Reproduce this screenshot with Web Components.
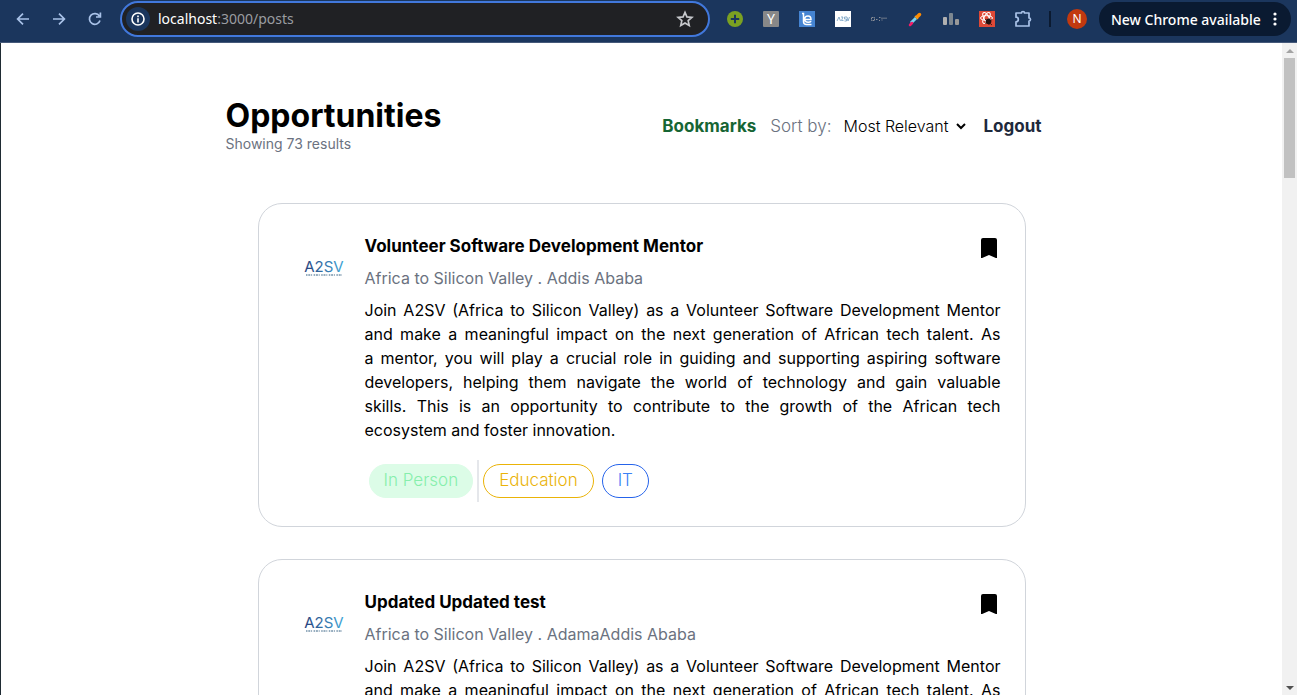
<!DOCTYPE html>
<html lang="en">
<head>
<meta charset="utf-8">
<title>Opportunities</title>
<style>
  html, body { height: 100%; margin: 0; }
  body { font-family: Inter, "Open Sans", sans-serif; background: #fff; color: #000; overflow: hidden; }
</style>
</head>
<body>
<browser-window>
  <browser-toolbar slot="toolbar"></browser-toolbar>
  <posts-header></posts-header>
  <post-list>
    <post-card>
      <span slot="title">Volunteer Software Development Mentor</span>
      <span slot="place">Africa to Silicon Valley . Addis Ababa</span>
      Join A2SV (Africa to Silicon Valley) as a Volunteer Software Development Mentor and make a meaningful impact on the next generation of African tech talent. As a&nbsp;mentor, you will play a crucial role in guiding and supporting aspiring software developers, helping them navigate the world of technology and gain valuable skills.&nbsp;This is an opportunity to contribute to the growth of the African tech ecosystem and foster innovation.
      <tag-chip slot="kind" tone="green">In Person</tag-chip>
      <tag-chip slot="tags" tone="amber">Education</tag-chip>
      <tag-chip slot="tags" tone="blue">IT</tag-chip>
    </post-card>
    <post-card>
      <span slot="title">Updated Updated test</span>
      <span slot="place">Africa to Silicon Valley . AdamaAddis Ababa</span>
      Join A2SV (Africa to Silicon Valley) as a Volunteer Software Development Mentor and make a meaningful impact on the next generation of African tech talent. As a&nbsp;mentor,
    </post-card>
  </post-list>
</browser-window>

<script>
function define(name, html) {
  const template = document.createElement('template');
  template.innerHTML = html;
  customElements.define(name, class extends HTMLElement {
    constructor() {
      super();
      this.attachShadow({ mode: 'open' }).append(template.content.cloneNode(true));
    }
  });
}

define('browser-window', `
<style>
  :host { display: flex; flex-direction: column; height: 100vh; }
  .view { flex: 1; min-height: 0; display: flex; border-left: 1px solid #1f2b33; }
  main { flex: 1; min-width: 0; overflow: hidden; }
</style>
<slot name="toolbar"></slot>
<div class="view"><main><slot></slot></main><page-scrollbar></page-scrollbar></div>`);

define('page-scrollbar', `
<style>
  :host { display: flex; flex-direction: column; width: 15px; background: #f1f1f1; }
  svg { display: block; width: 15px; height: 15px; flex: none; }
  .track { flex: 1; padding: 0 2px; }
  .thumb { height: 120px; background: #c1c1c1; }
</style>
<svg viewBox="0 0 15 15"><path d="M4 10l4-4 4 4z" fill="#a3a3a3"/></svg>
<div class="track"><div class="thumb"></div></div>
<svg viewBox="0 0 15 15"><path d="M4 6h8l-4 4z" fill="#505050"/></svg>`);

define('browser-toolbar', `
<style>
  :host { display: flex; align-items: center; height: 42px; padding: 0 6px 0 5px; background: #1b365d; border-bottom: 1px solid #45597a; font-family: "Noto Sans", sans-serif; box-sizing: content-box; }
  button { width: 36px; height: 34px; margin: 0 0 4px; padding: 0; border: 0; background: none; display: grid; place-items: center; flex: none; font: inherit; }
  svg { display: block; }
  .bar { flex: 1; min-width: 0; box-sizing: border-box; height: 36px; margin: 0 7px 4px; padding: 0 9px 0 4px; display: flex; align-items: center; background: #202124; border: 2px solid #4178dc; border-radius: 18px; }
  .bar button { margin: 0; }
  .bar .info { width: 24px; height: 24px; border-radius: 12px; background: #1b365d; }
  .url { flex: 1; margin-left: 8px; font-size: 14px; line-height: 20px; color: #9a9da1; }
  .url b { font-weight: 400; color: #fff; }
  .star { width: 28px; }
  .sep { width: 2px; height: 16px; margin: 0 8px 4px; background: #0b1a30; }
  .avatar span { width: 20px; height: 20px; border-radius: 10px; background: #c2390f; color: #fff; font-size: 12px; line-height: 20px; }
  .tile { width: 16px; height: 16px; line-height: 16px; color: #fff; font-size: 14px; text-align: center; }
  .update { width: 192px; height: 34px; margin-left: 4px; border-radius: 17px; background: #0a1a31; color: #fff; font-size: 14px; font-weight: 500; display: flex; align-items: center; justify-content: space-between; padding: 0 14px 0 12px; white-space: nowrap; }
</style>
<button aria-label="Back"><svg width="16" height="16" viewBox="0 0 16 16" fill="none" stroke="#a9c2e8" stroke-width="1.7"><path d="M14 8H3M8 2.6L2.6 8 8 13.4"/></svg></button>
<button aria-label="Forward"><svg width="16" height="16" viewBox="0 0 16 16" fill="none" stroke="#a9c2e8" stroke-width="1.7"><path d="M2 8h11M8 2.6L13.4 8 8 13.4"/></svg></button>
<button aria-label="Reload"><svg width="16" height="16" viewBox="0 0 16 16" fill="none" stroke="#a9c2e8" stroke-width="1.7"><path d="M13 9.6A5.4 5.4 0 1 1 12.4 5M13.4 1.6V6H9"/></svg></button>
<div class="bar">
  <button class="info" aria-label="Site information"><svg width="16" height="16" viewBox="0 0 16 16"><circle cx="8" cy="8" r="6" fill="none" stroke="#fff" stroke-width="1.6"/><path d="M7.2 4.6h1.6v1.6H7.2zM7.2 7.2h1.6v4.2H7.2z" fill="#fff"/></svg></button>
  <span class="url"><b>localhost</b>:3000/posts</span>
  <button class="star" aria-label="Bookmark this tab"><svg width="20" height="20" viewBox="0 0 24 24" fill="none" stroke="#c7c9cc" stroke-width="2"><path d="M12 4l2.300 5.500 6 .5-4.500 4 1.300 5.800-5.100-3.100-5.100 3.100 1.300-5.800-4.500-4 6-.5z"/></svg></button>
</div>
<button aria-label="Add extension"><svg width="16" height="16" viewBox="0 0 16 16"><circle cx="8" cy="8" r="8" fill="#7ba122"/><path d="M8 3.800v8.400M3.800 8h8.400" stroke="#1b365d" stroke-width="2"/></svg></button>
<button aria-label="Y extension"><span class="tile" style="background:#888;border-radius:1px">Y</span></button>
<button aria-label="Reader extension"><svg width="16" height="16" viewBox="0 0 16 16"><path fill="#4584d2" d="M0 0h16v16H0z"/><path d="M3 2.500h1.500v8q0 3 3 3h5M5.500 8.500h6.500q0-3.500-3-3.500-3.300 0-3.300 3.200 0 3 3.500 3 2 0 3-1" fill="none" stroke="#fff" stroke-width="1.500"/></svg></button>
<button aria-label="A2SV extension"><svg width="16" height="16" viewBox="0 0 16 16"><path fill="#fff" d="M0 0h16v16H0z"/><path d="M2 10l2-4 1.500 4M6 6h2L6.500 9.500H8.500M12 6H9.500v2H11.500v2H9.500M12 6l1 4 1.500-4" fill="none" stroke="#6e9cc0" stroke-width=".8"/></svg></button>
<button aria-label="Key extension"><svg width="16" height="16" viewBox="0 0 16 16" fill="none" stroke="#8b8f98"><path d="M.5 6.500h3v3h-3zM5 8.500h2M8 6.500h2M8 9.500h1M11 6.500v3M13 6.500v2M15 6.500v2" stroke-dasharray="1.500 .5"/></svg></button>
<button aria-label="Colour picker extension"><svg width="16" height="16" viewBox="0 0 16 16"><path d="M4 12L9 7" stroke="#79d3f2" stroke-width="3"/><path d="M3 14l2-2" stroke="#f31d68" stroke-width="2.500" stroke-linecap="round"/><path d="M10.500 5.500l2-2" stroke="#ff8a00" stroke-width="3.500" stroke-linecap="round"/><path d="M8 5l3 3" stroke="#fa9b16" stroke-width="1.500"/></svg></button>
<button aria-label="Statistics extension"><svg width="16" height="16" viewBox="0 0 16 16"><rect y="6" width="4" height="8" rx="1" fill="#b0b0b0"/><rect x="6" y="2" width="4" height="12" rx="1" fill="#7d8790"/><rect x="12" y="8" width="4" height="6" rx="1" fill="#999"/></svg></button>
<button aria-label="React developer tools"><svg width="16" height="16" viewBox="0 0 16 16"><path fill="#de4937" d="M0 0h16v16H0z"/><g fill="none" stroke="#fff" stroke-width="1"><ellipse cx="7.500" cy="7" rx="6" ry="2.400"/><ellipse cx="7.500" cy="7" rx="6" ry="2.400" transform="rotate(60 7.500 7)"/><ellipse cx="7.500" cy="7" rx="6" ry="2.400" transform="rotate(120 7.500 7)"/></g><circle cx="9.500" cy="10.500" r="2.800" fill="#211"/><path d="M6 8l7 6M6 12.500l7-4M10 7v7" stroke="#211" stroke-width=".8"/></svg></button>
<button aria-label="Extensions"><svg width="20" height="20" viewBox="0 0 20 20" fill="none" stroke="#a9c2e8" stroke-width="1.700" stroke-linejoin="round"><path d="M3 4h5.500a1.500 1.500 0 0 1 3 0H16v5a1.500 1.500 0 0 1 0 3V17H3v-4.200a2.300 2.300 0 0 0 0-4.600z"/></svg></button>
<span class="sep"></span>
<button class="avatar" aria-label="Profile"><span>N</span></button>
<button class="update"><span>New Chrome available</span><svg width="4" height="16" viewBox="0 0 4 16" fill="#fff"><circle cx="2" cy="3" r="1.600"/><circle cx="2" cy="8" r="1.600"/><circle cx="2" cy="13" r="1.600"/></svg></button>`);

define('posts-header', `
<style>
  :host { display: flex; align-items: center; justify-content: space-between; box-sizing: border-box; max-width: 832px; margin: 55px auto 0; padding-right: 16px; }
  h1 { margin: 0; font-size: 32px; line-height: 36px; font-weight: 700; }
  p { margin: 0; font-size: 14px; line-height: 20px; color: #6b7280; }
  nav { display: flex; align-items: center; font-size: 17px; line-height: 24px; }
  a { font-weight: 700; text-decoration: none; color: #166534; }
  a.out { color: #1e293b; margin-left: 16px; }
  label { margin: 0 12px 0 14px; font-weight: 300; color: #6b7280; }
  .pick { display: grid; align-items: center; font-size: 16px; }
  .pick > * { grid-area: 1 / 1; }
  select { appearance: none; margin: 0; padding: 0 18px 0 0; border: 0; background: none; font: inherit; font-weight: 300; color: #000; height: 24px; }
  svg { justify-self: end; pointer-events: none; }
</style>
<div><h1>Opportunities</h1><p>Showing 73 results</p></div>
<nav>
  <a href="#bookmarks">Bookmarks</a>
  <label for="sort">Sort by:</label>
  <span class="pick"><select id="sort"><option>Most Relevant</option></select><svg width="12" height="12" viewBox="0 0 12 12" fill="none" stroke="#000" stroke-width="2"><path d="M2 4l4 4 4-4"/></svg></span>
  <a class="out" href="#logout">Logout</a>
</nav>`);

define('post-list', `
<style>
  :host { display: flex; flex-direction: column; gap: 32px; max-width: 768px; margin: 49px auto 0; }
</style>
<slot></slot>`);

define('org-logo', `
<style>
  :host { display: block; }
  svg { display: block; margin: 0 auto; overflow: visible; }
  text { font: 400 15px Inter, sans-serif; }
</style>
<svg width="44" height="20" viewBox="0 0 44 20" role="img" aria-label="A2SV">
  <defs><linearGradient id="g"><stop stop-color="#27407c"/><stop offset="1" stop-color="#3fa5d8"/></linearGradient></defs>
  <text x="22" y="14" text-anchor="middle" fill="url(#g)">A2SV</text>
  <path d="M4 17h36" stroke="#48708f" stroke-width="1.400" stroke-dasharray="1.500 .8 2 .8 1 1.500" opacity=".75"/>
</svg>`);

define('tag-chip', `
<style>
  :host { display: block; box-sizing: border-box; height: 34px; margin: 0 4px; padding: 0 15px; border: 1px solid; border-radius: 17px; font-size: 17px; line-height: 30px; font-weight: 300; }
  :host([tone=green]) { padding: 0 14px; background: #dcfce7; border-color: #dcfce7; color: #86efac; }
  :host([tone=amber]) { border-color: #eab308; color: #eab308; }
  :host([tone=blue]) { border-color: #2563eb; color: #3b82f6; }
</style>
<slot></slot>`);

define('post-card', `
<style>
  :host { display: grid; grid-template-columns: 82px 1fr; box-sizing: border-box; border: 1px solid #d1d5db; border-radius: 24px; padding: 30px 24px 24px; font-size: 16px; line-height: 24px; }
  org-logo { margin-top: 24px; }
  header { display: flex; justify-content: space-between; align-items: center; }
  h2 { margin: 0; font-size: 17px; line-height: 24px; font-weight: 700; }
  button { border: 0; padding: 0 4px 0 0; margin: 4px 0 0; background: none; height: 20px; }
  button svg { display: block; }
  .place { margin: 8px 0; color: #6b7280; }
  .text { margin: 0; text-align: justify; }
  footer { display: flex; align-items: center; height: 42px; margin-top: 18px; }
  hr { width: 2px; height: 42px; margin: 0; border: 0; background: #e5e7eb; }
</style>
<org-logo></org-logo>
<article>
  <header><h2><slot name="title"></slot></h2><button aria-label="Remove bookmark"><svg width="16" height="20" viewBox="0 0 16 20"><path d="M2 0h12a2 2 0 0 1 2 2v18.500L8 17l-8 3.500V2a2 2 0 0 1 2-2z"/></svg></button></header>
  <p class="place"><slot name="place"></slot></p>
  <p class="text"><slot></slot></p>
  <footer><slot name="kind"></slot><hr><slot name="tags"></slot></footer>
</article>`);
</script>
</body>
</html>
